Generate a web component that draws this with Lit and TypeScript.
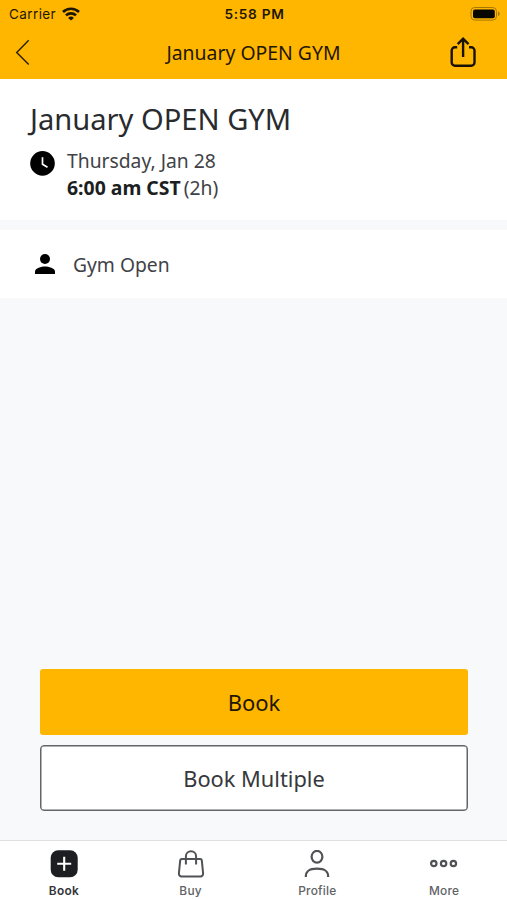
import { LitElement, html, css, svg } from "lit";
import { customElement } from "lit/decorators.js";

const tabs = [
  {
    label: "Book",
    active: true,
    icon: svg`<rect x="0.7" y="0.2" width="27" height="27" rx="7.5" fill="#1c1e22"/><path d="M14.2 6.700v14M7.200 13.700h14" stroke="#fff" stroke-width="2.100" fill="none"/>`,
  },
  {
    label: "Buy",
    active: false,
    icon: svg`<path d="M4.8 9h18.400a1.600 1.600 0 0 1 1.600 1.300l1.300 13a2.700 2.700 0 0 1-2.700 3.100H4.600a2.700 2.700 0 0 1-2.700-3.100l1.300-13a1.600 1.600 0 0 1 1.600-1.300zM8.900 14.600V6.400a5.100 5.100 0 0 1 10.200 0v8.200" fill="none" stroke="#505255" stroke-width="2"/>`,
  },
  {
    label: "Profile",
    active: false,
    icon: svg`<ellipse cx="14" cy="6.800" rx="5.400" ry="5.900" fill="none" stroke="#505255" stroke-width="2.200"/><path d="M2.800 27c0-5.600 2.700-8.400 11.200-8.400s11.200 2.800 11.200 8.400" fill="none" stroke="#505255" stroke-width="2.200"/>`,
  },
  {
    label: "More",
    active: false,
    icon: svg`<g fill="none" stroke="#505255" stroke-width="2.200"><circle cx="3.800" cy="13.500" r="2.700"/><circle cx="13.600" cy="13.500" r="2.700"/><circle cx="23.400" cy="13.500" r="2.700"/></g>`,
  },
];

@customElement("app-root")
export class AppRoot extends LitElement {
  static styles = css`
    :host {
      display: flex;
      flex-direction: column;
      height: 900px;
      background: #f8f9fb;
      color: #292b2e;
      font-family: "Noto Sans", sans-serif;
      box-sizing: border-box;
    }
    * { box-sizing: border-box; }
    svg { display: block; flex: none; }
    header { background: #ffb600; height: 79px; color: #1f1600; flex: none; }
    .status {
      height: 27px;
      display: grid;
      grid-template-columns: 1fr auto 1fr;
      align-items: center;
      padding: 0 7px 0 9px;
      font: 13.5px/28px Inter, sans-serif;
    }
    .carrier { display: flex; align-items: center; gap: 6px; letter-spacing: 0.4px; }
    .carrier svg { margin-top: -1px; }
    .clock { font-weight: 600; font-size: 13.700px; letter-spacing: 0.7px; }
    .battery { justify-self: end; }
    .nav {
      height: 52px;
      display: grid;
      grid-template-columns: 1fr auto 1fr;
      align-items: center;
      padding: 0 30px 0 15px;
    }
    .back { margin-top: -1px; }
    .title { font-size: 19.400px; line-height: 52px; padding-left: 15px; }
    .share { justify-self: end; margin-top: -2px; }
    .event { background: #fff; height: 141px; padding: 20px 30px 0; flex: none; }
    h1 { margin: 0; font-size: 29.100px; line-height: 40px; font-weight: 400; }
    .when { display: flex; gap: 12px; padding-top: 8px; font-size: 19.300px; line-height: 27px; }
    .when svg { margin-top: 4px; }
    .date { color: #404246; }
    .time { display: flex; gap: 3px; color: #404246; }
    .time b { color: #1c1e22; font-size: 19.400px; }
    .host {
      margin-top: 10px;
      background: #fff;
      height: 68px;
      display: flex;
      align-items: center;
      gap: 18px;
      padding-left: 35px;
      font-size: 19.300px;
      color: #404246;
      flex: none;
    }
    .host span { padding-top: 1px; }
    .actions { margin-top: auto; padding: 0 39px 29px 40px; display: grid; gap: 10px; }
    button {
      height: 66px;
      border: 0;
      border-radius: 3px;
      background: #ffb600;
      color: #1f1600;
      font: 22px/30px "Noto Sans", sans-serif;
      padding: 0;
    }
    .outline {
      background: #fff;
      border: 1px solid #626467;
      box-shadow: inset 0 0 0 0.5px #626467;
      color: #36383b;
      border-radius: 4px;
      font-size: 21.800px;
      padding-top: 1px;
    }
    footer {
      height: 60px;
      flex: none;
      border-top: 1px solid #dedfe1;
      background: #fff;
      display: grid;
      grid-template-columns: repeat(4, 1fr);
    }
    .tab {
      display: flex;
      flex-direction: column;
      align-items: center;
      padding: 9px 0 0 1px;
      gap: 5px;
      font: 500 11.900px/16px Inter, sans-serif;
      letter-spacing: 0.25px;
      color: #606265;
    }
    .active { color: #333539; font-weight: 600; }
  `;

  render() {
    return html`
      <header>
        <div class="status">
          <div class="carrier">
            <span>Carrier</span>
            <svg width="18" height="14" viewBox="0 0 18 14" fill="none" stroke="#1f1600" stroke-width="2.700">
              <path d="M1 5a11.500 11.500 0 0 1 16 0M4 8.400a7.200 7.200 0 0 1 10 0" />
              <path d="M9 13.600 6.100 10.900a4.200 4.200 0 0 1 5.800 0z" fill="#1f1600" stroke="none" />
            </svg>
          </div>
          <div class="clock">5:58 PM</div>
          <svg class="battery" width="30" height="14" viewBox="0 0 30 14">
            <rect x="1" y="0.500" width="25.500" height="12.600" rx="3.800" fill="none" stroke="#a67704" />
            <rect x="3" y="2.400" width="21.800" height="8.800" rx="2" fill="#080600" />
            <path d="M28 4.500v4.600c1-.4 1.700-1.200 1.700-2.300S29 4.900 28 4.500z" fill="#a67704" />
          </svg>
        </div>
        <div class="nav">
          <svg class="back" width="15" height="27" viewBox="0 0 15 27" fill="none" stroke="#2a1e00" stroke-width="1.400">
            <path d="M13.700 1.200 1.700 13.400l12 12.200" />
          </svg>
          <div class="title">January OPEN GYM</div>
          <svg class="share" width="27" height="31" viewBox="0 0 27 31" fill="none" stroke="#1a1200" stroke-width="2.400">
            <path d="M7.200 10.300H4.900A3.200 3.200 0 0 0 1.700 13.500v12a3.200 3.200 0 0 0 3.200 3.200h16.400a3.200 3.200 0 0 0 3.200-3.200v-12a3.200 3.200 0 0 0-3.200-3.200H19M13.100 20V1.700M7.700 7.200l5.400-5.500 5.400 5.500" />
          </svg>
        </div>
      </header>
      <section class="event">
        <h1>January OPEN GYM</h1>
        <div class="when">
          <svg width="25" height="25" viewBox="0 0 25 25">
            <circle cx="12.500" cy="12.400" r="12.300" />
            <path d="M12.500 6.200v7l5 3" fill="none" stroke="#fff" stroke-width="1.700" />
          </svg>
          <div>
            <div class="date">Thursday, Jan 28</div>
            <div class="time"><b>6:00 am CST</b><span>(2h)</span></div>
          </div>
        </div>
      </section>
      <section class="host">
        <svg width="20" height="20" viewBox="0 0 20 20">
          <circle cx="10" cy="5" r="5" />
          <path d="M0 20v-2.500C0 14.200 6.500 12.500 10 12.500s10 1.700 10 5V20z" />
        </svg>
        <span>Gym Open</span>
      </section>
      <div class="actions">
        <button>Book</button>
        <button class="outline">Book Multiple</button>
      </div>
      <footer>
        ${tabs.map(
          (t) => html`<div class="tab ${t.active ? "active" : ""}">
            <svg width="28" height="28" viewBox="0 0 28 28">${t.icon}</svg>
            <span>${t.label}</span>
          </div>`
        )}
      </footer>
    `;
  }
}
